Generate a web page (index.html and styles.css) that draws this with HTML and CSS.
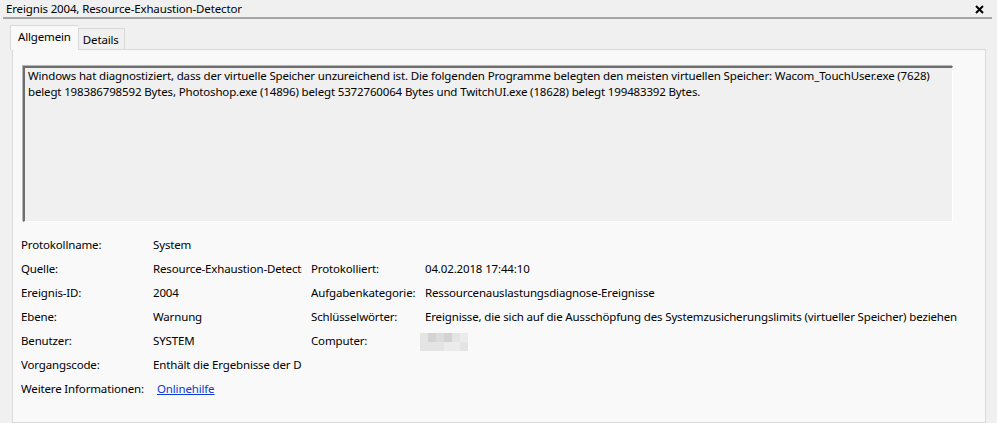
FILE: index.html
```html
<!DOCTYPE html>
<html lang="de">
<head>
<meta charset="utf-8">
<title>Ereignis 2004</title>
<link rel="stylesheet" href="styles.css">
</head>
<body>
<div class="window">
  <div class="titlebar">
    <span class="title">Ereignis 2004, Resource-Exhaustion-Detector</span>
    <svg class="close" width="9" height="9" viewBox="0 0 9 9"><path d="M1 1 L8 8 M8 1 L1 8" stroke="#000" stroke-width="2" fill="none"/></svg>
  </div>
  <div class="rule"></div>
  <div class="tabs">
    <div class="tab active">Allgemein</div>
    <div class="tab">Details</div>
  </div>
  <div class="panel">
    <div class="message">Windows hat diagnostiziert, dass der virtuelle Speicher unzureichend ist. Die folgenden Programme belegten den meisten virtuellen Speicher: Wacom_TouchUser.exe (7628) belegt 198386798592 Bytes, Photoshop.exe (14896) belegt 5372760064 Bytes und TwitchUI.exe (18628) belegt 199483392 Bytes.</div>
    <div class="fields">
      <div class="label">Protokollname:</div><div class="value">System</div><div></div><div></div>
      <div class="label">Quelle:</div><div class="value">Resource-Exhaustion-Detector</div><div class="label">Protokolliert:</div><div class="value wide">04.02.2018 17:44:10</div>
      <div class="label">Ereignis-ID:</div><div class="value">2004</div><div class="label">Aufgabenkategorie:</div><div class="value wide">Ressourcenauslastungsdiagnose-Ereignisse</div>
      <div class="label">Ebene:</div><div class="value">Warnung</div><div class="label">Schlüsselwörter:</div><div class="value wide">Ereignisse, die sich auf die Ausschöpfung des Systemzusicherungslimits (virtueller Speicher) beziehen</div>
      <div class="label">Benutzer:</div><div class="value">SYSTEM</div><div class="label">Computer:</div><div class="value wide"><span class="blur"><i class="c1"></i><i class="c2"></i><i class="c3"></i><i class="c2"></i><i class="c1"></i><i class="c4"></i><i class="c1"></i><i class="c1"></i><i class="c1"></i><i class="c4"></i><i class="c4"></i><i class="c1"></i></span></div>
      <div class="label">Vorgangscode:</div><div class="value">Enthält die Ergebnisse der Diagnose</div><div></div><div></div>
      <div class="label">Weitere Informationen:</div><div class="value"><a class="link" href="#">Onlinehilfe</a></div><div></div><div></div>
    </div>
  </div>
</div>
</body>
</html>
```

FILE: styles.css
```css
* { box-sizing: border-box; }
html, body {
  margin: 0;
  padding: 0;
  background: #f0f0f0;
  overflow: hidden;
}
body {
  font-family: "Noto Sans", "Open Sans", sans-serif;
  font-size: 11.5px;
  letter-spacing: -0.15px;
  color: #000;
  width: 997px;
  height: 423px;
}
.window {
  display: flex;
  flex-direction: column;
  height: 423px;
}
.titlebar {
  display: flex;
  justify-content: space-between;
  align-items: center;
  height: 17px;
  padding: 0 13px 0 6px;
  line-height: 17px;
}
.close { display: block; margin-top: 2px; }
.rule {
  height: 2px;
  margin: 0 5px 0 3px;
  background: #a6a6a6;
}
.tabs {
  display: flex;
  align-items: flex-end;
  padding: 6px 0 0 10px;
  height: 30px;
  position: relative;
  z-index: 1;
}
.tab {
  height: 21px;
  padding: 0 5px 0 4px;
  line-height: 21px;
  border: 1px solid #d9d9d9;
  border-bottom: none;
  background: #f0f0f0;
}
.tab.active {
  padding: 0 7px 0 7px;
  line-height: 22px;
  background: #f9f9f9;
  border-right: none;
  margin-bottom: -1px;
  height: 25px;
}
.panel {
  flex: 1;
  margin: 0 11px 0 12px;
  border: 1px solid #d9d9d9;
  background: #f9f9f9;
  padding: 16px 0 0 10px;
}
.message {
  width: 930px;
  height: 156px;
  border-style: solid;
  border-width: 2px 1px 1px 2px;
  border-color: #6e6e6e #ffffff #ffffff #6e6e6e;
  background: #f0f0f0;
  padding: 0 4px 0 3px;
  line-height: 16px;
  box-shadow: -1px -1px 0 #b5b5b5;
}
.fields {
  display: grid;
  grid-template-columns: 132px 158px 114px 1fr;
  grid-auto-rows: 24px;
  margin: 11px 0 0 -2px;
  line-height: 24px;
}
.label, .value {
  white-space: nowrap;
  overflow: hidden;
}
.value { margin-right: 9px; }
.value.wide { overflow: visible; margin-right: 0; }
.link {
  color: #0a3bd6;
  text-decoration: underline;
  margin-left: 4px;
}
.blur {
  display: inline-grid;
  grid-template-columns: repeat(6, 8px);
  grid-template-rows: 9px 9px;
  vertical-align: middle;
  margin: 0 0 0 -5px;
}
.blur i { display: block; }
.c1 { background: #e4e4e4; }
.c2 { background: #d3d3d3; }
.c3 { background: #dcdcdc; }
.c4 { background: #ebebeb; }
```
